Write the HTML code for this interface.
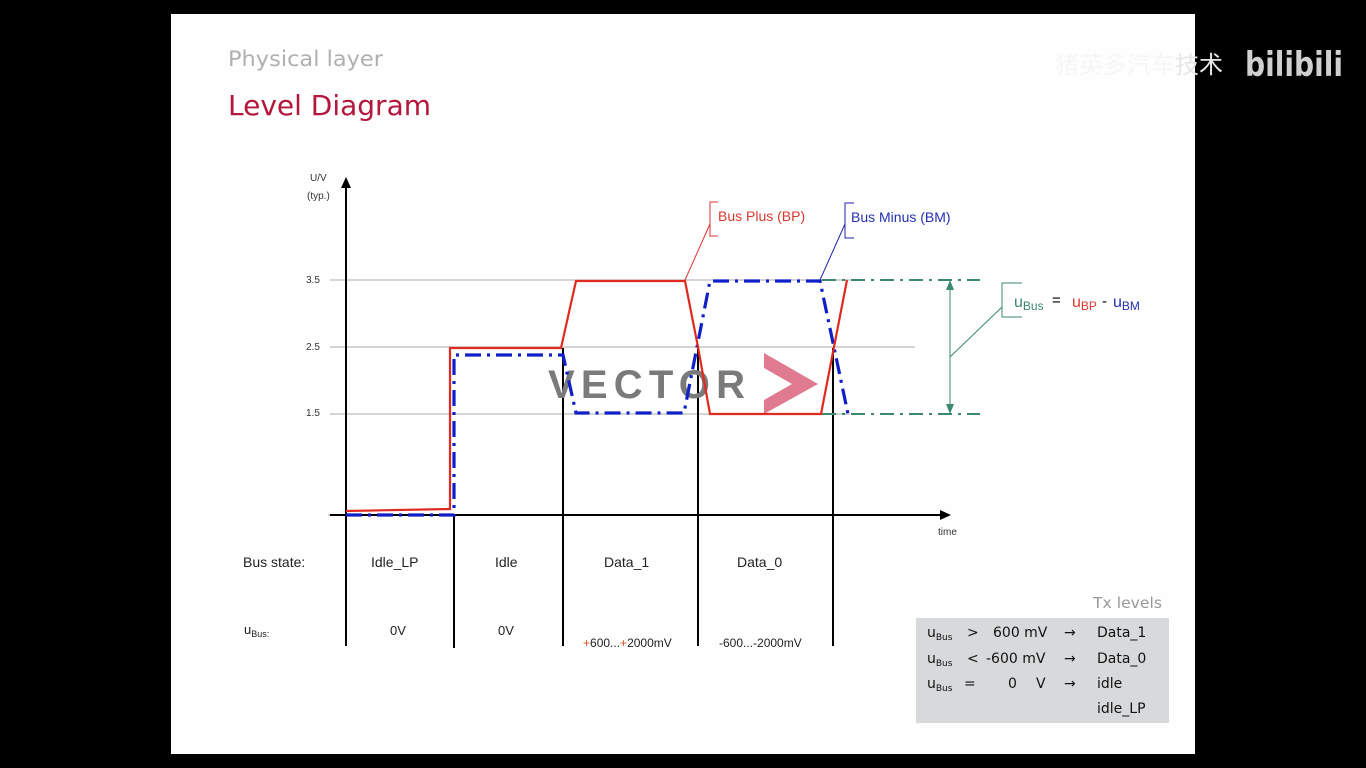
<!DOCTYPE html>
<html><head><meta charset="utf-8">
<style>
html,body{margin:0;padding:0;background:#000;width:1366px;height:768px;overflow:hidden}
svg{display:block}
</style></head>
<body>
<svg width="1366" height="768" viewBox="0 0 1366 768" xmlns="http://www.w3.org/2000/svg">
<rect x="0" y="0" width="1366" height="768" fill="#000"/>
<rect x="171" y="14" width="1024" height="740" fill="#fefefe"/>

<g font-family="'DejaVu Sans',sans-serif">
<text x="228" y="66" font-size="21" fill="#b0b0b0" textLength="155" lengthAdjust="spacingAndGlyphs">Physical layer</text>
<text x="228" y="115" font-size="28" fill="#b5163c" textLength="203" lengthAdjust="spacingAndGlyphs">Level Diagram</text>
</g>

<!-- watermark -->
<text x="1055" y="73" font-family="'Liberation Sans','Noto Sans CJK SC',sans-serif" font-size="24" fill="#f6f6f6">猪英多汽车</text>
<text x="1175" y="73" font-family="'Liberation Sans','Noto Sans CJK SC',sans-serif" font-size="24" fill="#e6e6e6">技术</text>
<text x="1245" y="76" font-family="'DejaVu Sans',sans-serif" font-weight="bold" font-size="34" fill="#d0d0d0" textLength="98" lengthAdjust="spacingAndGlyphs">bilibili</text>

<!-- gridlines -->
<g stroke="#aaa" stroke-width="1">
<line x1="330" y1="280" x2="850" y2="280"/>
<line x1="330" y1="347" x2="915" y2="347"/>
<line x1="330" y1="414" x2="850" y2="414"/>
<line x1="328" y1="515" x2="345" y2="515"/>
</g>
<g font-family="'Liberation Sans',sans-serif" font-size="10" fill="#333">
<text x="306" y="283">3.5</text>
<text x="306" y="350">2.5</text>
<text x="306" y="416">1.5</text>
<text x="310" y="181">U/V</text>
<text x="307" y="199">(typ.)</text>
<text x="938" y="535">time</text>
</g>

<!-- axes -->
<line x1="346" y1="186" x2="346" y2="646" stroke="#000" stroke-width="2"/>
<polygon points="346,177 341,188 351,188" fill="#000"/>
<line x1="330" y1="515" x2="942" y2="515" stroke="#000" stroke-width="2"/>
<polygon points="951,515 940,510 940,520" fill="#000"/>

<!-- dividers -->
<g stroke="#000" stroke-width="2">
<line x1="454" y1="515" x2="454" y2="648"/>
<line x1="563" y1="348" x2="563" y2="646"/>
<line x1="698" y1="348" x2="698" y2="646"/>
<line x1="833" y1="348" x2="833" y2="646"/>
</g>

<!-- green diff -->
<g stroke="#3a8a6e" stroke-width="2" stroke-dasharray="14,6,3,6" fill="none">
<line x1="822" y1="280" x2="980" y2="280"/>
<line x1="822" y1="414" x2="980" y2="414"/>
</g>
<line x1="950" y1="288" x2="950" y2="406" stroke="#3a8a6e" stroke-width="1"/>
<polygon points="950,280 946,290 954,290" fill="#3a8a6e"/>
<polygon points="950,414 946,404 954,404" fill="#3a8a6e"/>
<line x1="950" y1="357" x2="1002" y2="307" stroke="#3a8a6e" stroke-width="1"/>
<path d="M1022,283 H1002 V317 H1022" stroke="#3a8a6e" stroke-width="1" fill="none"/>

<!-- labels brackets -->
<path d="M718,202 H710 V236 H718" stroke="#d33" stroke-width="1" fill="none"/>
<line x1="710" y1="224" x2="685" y2="280" stroke="#d33" stroke-width="1"/>
<path d="M854,203 H845 V238 H854" stroke="#22a" stroke-width="1" fill="none"/>
<line x1="845" y1="224" x2="820" y2="280" stroke="#22a" stroke-width="1"/>
<g font-family="'Liberation Sans',sans-serif" font-size="14">
<text x="718" y="221" fill="#d83a2e">Bus Plus (BP)</text>
<text x="851" y="222" fill="#2430b0">Bus Minus (BM)</text>
</g>

<!-- VECTOR watermark -->
<text x="548" y="398" font-family="'Liberation Sans',sans-serif" font-weight="bold" font-size="40" fill="#7a7a7a" textLength="197" lengthAdjust="spacing">VECTOR</text>
<polygon points="764,353 818,384 764,414 764,400 792,384 764,368" fill="#e07a90"/>

<!-- blue BM -->
<polyline points="346,515 454,515 454,355 563,355 576,413 684,413 710,281 820,281 848,414" fill="none" stroke="#1020c8" stroke-width="3.2" stroke-dasharray="16,6,3,6"/>
<!-- red BP -->
<polyline points="346,511 450,509 450,348 561,348 576,281 685,281 698,347 710,414 821,414 847,280" fill="none" stroke="#e02a1f" stroke-width="2.2"/>

<!-- formula -->
<g font-family="'Liberation Sans',sans-serif">
<text x="1014" y="307" font-size="16" fill="#3a8a6e">u<tspan font-size="12" dy="3">Bus</tspan></text>
<text x="1052" y="305" font-size="15" fill="#000">=</text>
<text x="1072" y="307" font-size="16" fill="#d83a2e">u<tspan font-size="12" dy="3">BP</tspan></text>
<text x="1102" y="306" font-size="15" fill="#000">-</text>
<text x="1113" y="307" font-size="16" fill="#2430b0">u<tspan font-size="12" dy="3">BM</tspan></text>
</g>

<!-- bus state rows -->
<g font-family="'Liberation Sans',sans-serif" font-size="14" fill="#222">
<text x="243" y="567">Bus state:</text>
<text x="371" y="567">Idle_LP</text>
<text x="495" y="567">Idle</text>
<text x="604" y="567">Data_1</text>
<text x="737" y="567">Data_0</text>
<text x="390" y="635" font-size="13">0V</text>
<text x="498" y="635" font-size="13">0V</text>
<text x="244" y="634" font-size="13">u<tspan font-size="9" dy="3">Bus:</tspan></text>
<text x="583" y="647" font-size="12"><tspan fill="#e05020">+</tspan>600...<tspan fill="#e05020">+</tspan>2000mV</text>
<text x="719" y="647" font-size="12">-600...-2000mV</text>
</g>

<!-- Tx levels table -->
<text x="1093" y="608" font-family="'DejaVu Sans',sans-serif" font-size="15" fill="#999" textLength="69" lengthAdjust="spacingAndGlyphs">Tx levels</text>
<rect x="916" y="618" width="253" height="105" fill="#d8d9db"/>
<g font-family="'DejaVu Sans',sans-serif" font-size="14" fill="#111">
<text x="927" y="637">u<tspan font-size="9" dy="3">Bus</tspan></text>
<text x="967" y="637">&gt;</text>
<text x="993" y="637">600 mV</text>
<text x="1064" y="637">→</text>
<text x="1097" y="637">Data_1</text>
<text x="927" y="663">u<tspan font-size="9" dy="3">Bus</tspan></text>
<text x="967" y="663">&lt;</text>
<text x="986" y="663">-600 mV</text>
<text x="1064" y="663">→</text>
<text x="1097" y="663">Data_0</text>
<text x="927" y="688">u<tspan font-size="9" dy="3">Bus</tspan></text>
<text x="964" y="688">=</text>
<text x="1008" y="688">0</text>
<text x="1036" y="688">V</text>
<text x="1064" y="688">→</text>
<text x="1097" y="688">idle</text>
<text x="1097" y="713">idle_LP</text>
</g>
</svg>
</body></html>
